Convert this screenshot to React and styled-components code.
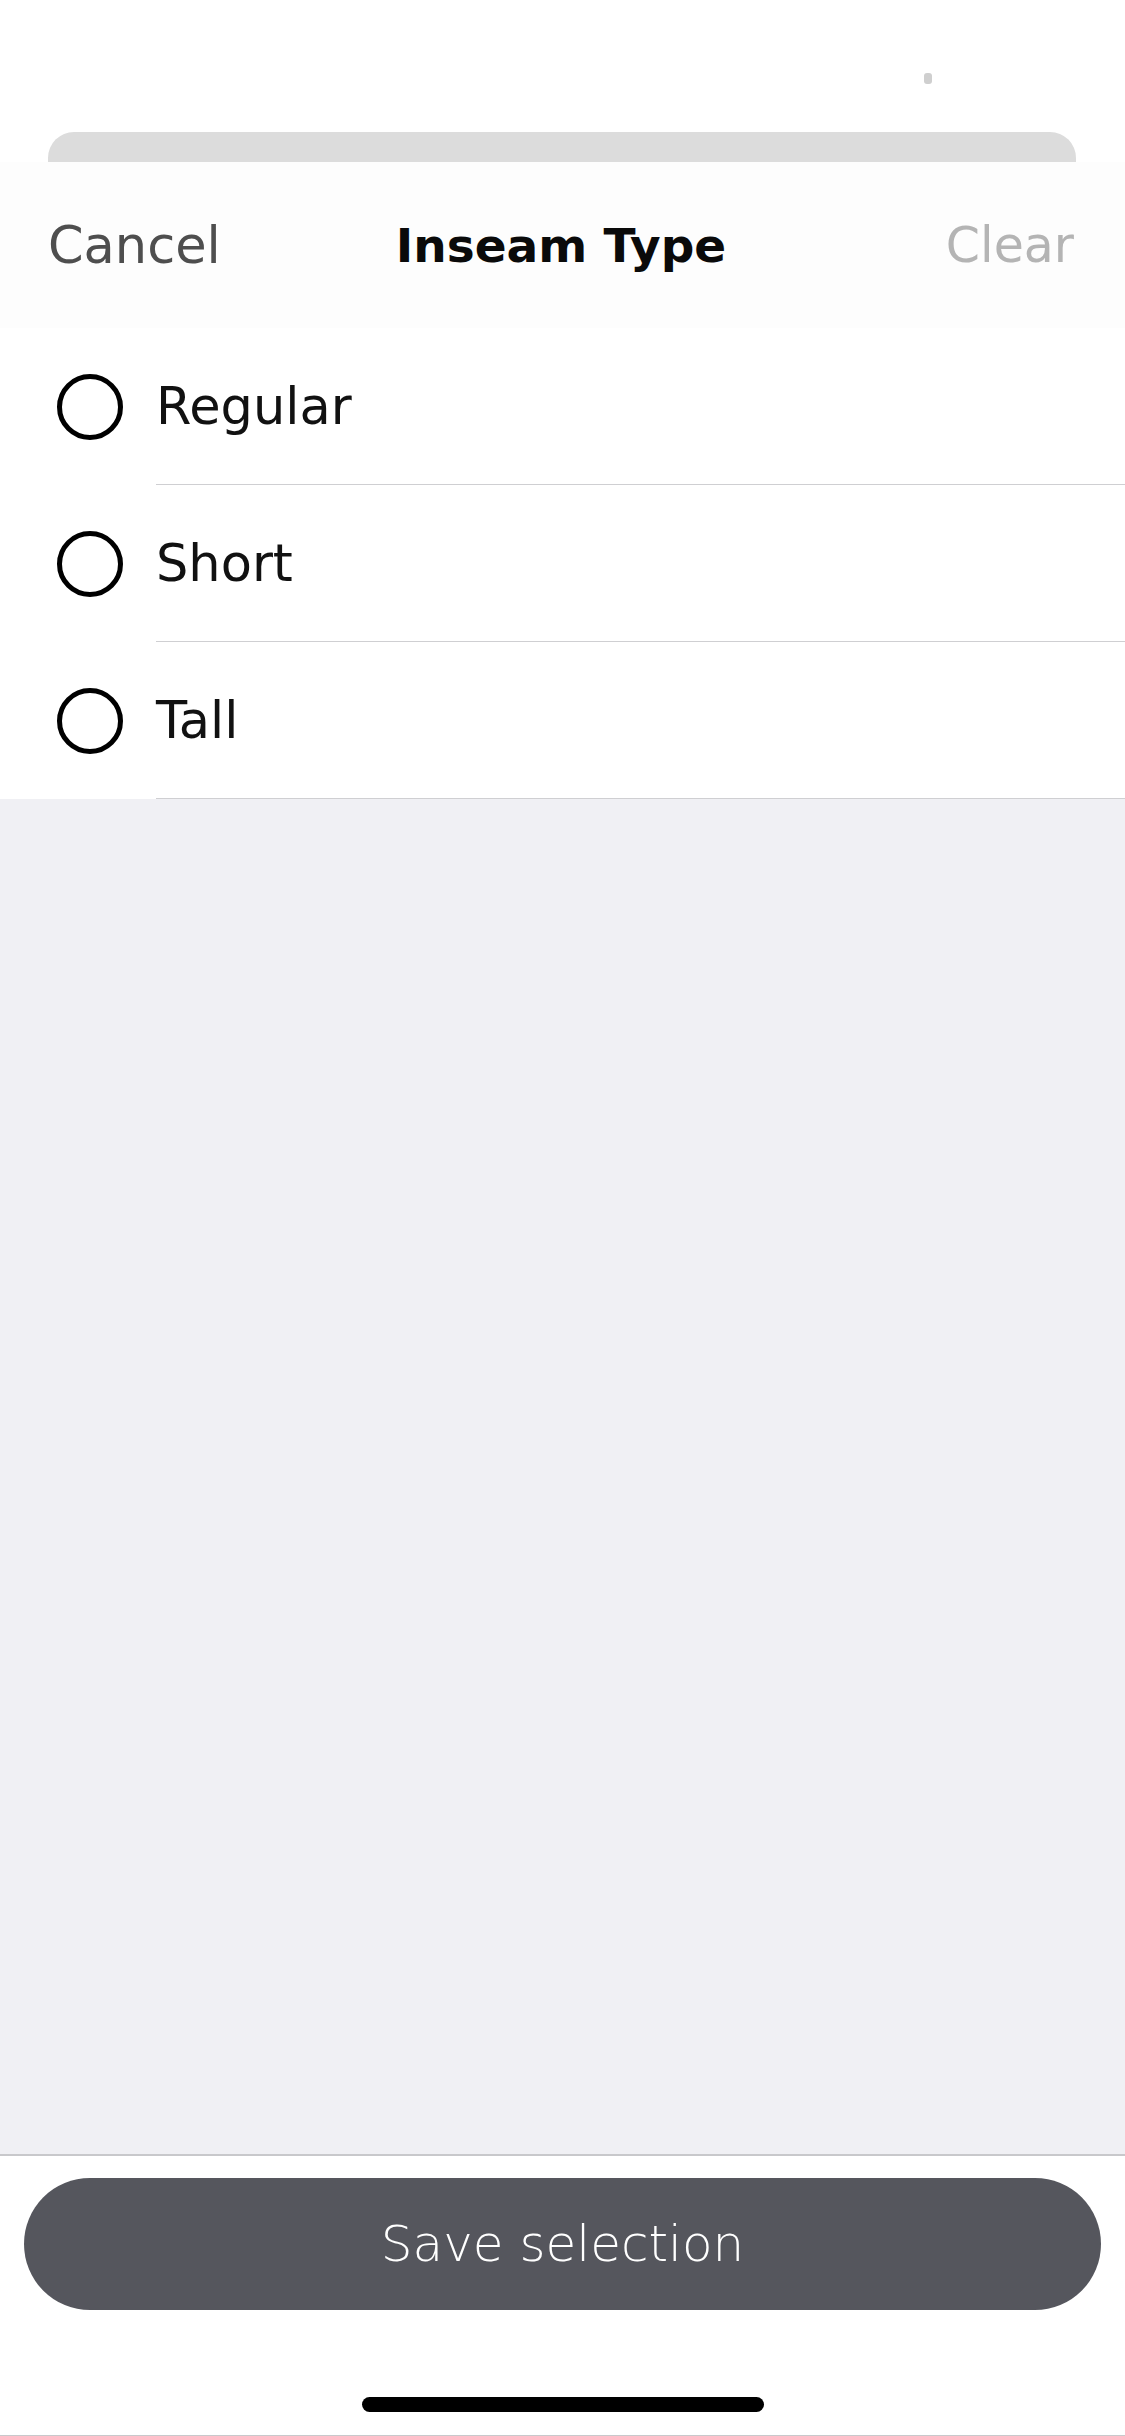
import React from "react";
import styled, { createGlobalStyle } from "styled-components";

const GlobalStyle = createGlobalStyle`
  html, body {
    margin: 0;
    padding: 0;
    background: #ffffff;
  }
  body {
    font-family: "DejaVu Sans", "Open Sans", sans-serif;
  }
`;

// whole phone screen
const Screen = styled.div`
  width: 1125px;
  height: 2436px;
  display: flex;
  flex-direction: column;
  background: #ffffff;
  overflow: hidden;
`;

const StatusArea = styled.div`
  height: 132px;
  box-sizing: border-box;
  padding: 73px 0 0 924px;
  background: #ffffff;
`;

const StatusDot = styled.div`
  width: 8px;
  height: 11px;
  border-radius: 3px;
  background: #cfcfcf;
`;

// the stacked sheet peeking out behind the modal
const SheetTab = styled.div`
  height: 30px;
  margin: 0 49px 0 48px;
  background: #dcdcdc;
  border-radius: 26px 26px 0 0;
`;

const Header = styled.header`
  height: 166px;
  box-sizing: border-box;
  padding: 0 51px 0 48px;
  display: flex;
  align-items: center;
  justify-content: space-between;
  background: #fdfdfd;
`;

const HeaderAction = styled.span`
  font-size: ${(props) => (props.muted ? "49px" : "51px")};
  color: ${(props) => (props.muted ? "#b4b4b4" : "#4e4e4e")};
  flex: 1;
  text-align: ${(props) => (props.right ? "right" : "left")};
`;

const Title = styled.h1`
  margin: 0;
  font-size: 47px;
  font-weight: 700;
  color: #0a0a0a;
`;

const List = styled.ul`
  list-style: none;
  margin: 0;
  padding: 0;
  background: #ffffff;
`;

const Row = styled.li`
  height: 157px;
  display: flex;
  align-items: stretch;
  padding-left: 57px;
`;

const Radio = styled.span`
  align-self: center;
  flex-shrink: 0;
  width: 66px;
  height: 66px;
  box-sizing: border-box;
  border: 5.5px solid #000000;
  border-radius: 50%;
  background: ${(props) => (props.checked ? "#000" : "transparent")};
  margin-right: 33px;
  margin-top: 1px;
`;

const Label = styled.span`
  flex: 1;
  display: flex;
  align-items: center;
  font-size: 51px;
  color: #111111;
  border-bottom: 1.5px solid #cfcfd2;
`;

const Backdrop = styled.div`
  flex: 1;
  background: #f0f0f4;
`;

const Footer = styled.footer`
  height: 282px;
  box-sizing: border-box;
  border-top: 2px solid #c8c8cb;
  border-bottom: 1px solid #c8c8cb;
  background: #ffffff;
  display: flex;
  flex-direction: column;
  align-items: center;
  padding-top: 22px;
`;

const SaveButton = styled.button`
  width: 1077px;
  height: 132px;
  border: none;
  border-radius: 66px;
  background: #55565d;
  color: #ffffff;
  font-family: "DejaVu Sans", "Open Sans", sans-serif;
  font-size: 50px;
  font-weight: 300;
  cursor: pointer;
`;

const HomeIndicator = styled.div`
  width: 402px;
  height: 15px;
  border-radius: 8px;
  background: #000000;
  margin-top: 87px;
`;

const options = ["Regular", "Short", "Tall"];

const App = () => {
  return (
    <Screen>
      <GlobalStyle />
      <StatusArea>
        <StatusDot />
      </StatusArea>
      <SheetTab />
      <Header>
        <HeaderAction>Cancel</HeaderAction>
        <Title>Inseam Type</Title>
        <HeaderAction muted right>
          Clear
        </HeaderAction>
      </Header>
      <List>
        {options.map((opt) => (
          <Row key={opt}>
            <Radio />
            <Label>{opt}</Label>
          </Row>
        ))}
      </List>
      <Backdrop />
      <Footer>
        <SaveButton>Save selection</SaveButton>
        <HomeIndicator />
      </Footer>
    </Screen>
  );
};

export default App;
